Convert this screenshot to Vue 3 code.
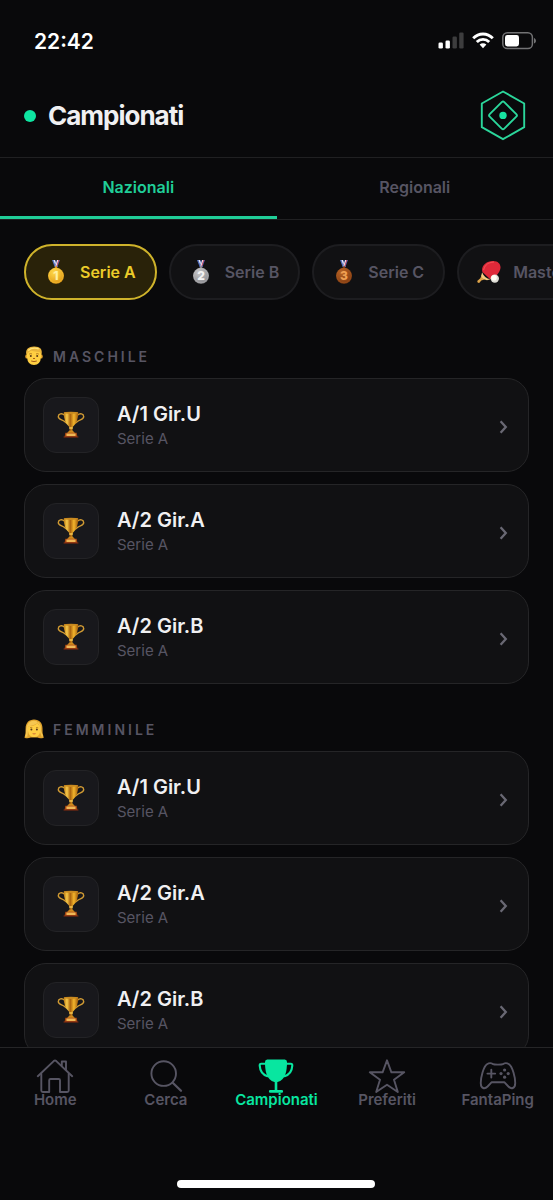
<script setup>
import { ref } from 'vue'

const tabs = ['Nazionali', 'Regionali']
const activeTab = ref('Nazionali')

const series = [
  { name: 'Serie A', icon: 'medal', rank: '1', light: '#ffd94a', dark: '#dc9210', digit: '#fff0a0' },
  { name: 'Serie B', icon: 'medal', rank: '2', light: '#c9c9cb', dark: '#858589', digit: '#f3f3f3' },
  { name: 'Serie C', icon: 'medal', rank: '3', light: '#b96425', dark: '#7b3810', digit: '#f0a052' },
  { name: 'Master', icon: 'paddle' },
]
const activeSeries = ref('Serie A')

const groups = [
  { name: 'Maschile', face: 'man', items: ['A/1 Gir.U', 'A/2 Gir.A', 'A/2 Gir.B'] },
  { name: 'Femminile', face: 'woman', items: ['A/1 Gir.U', 'A/2 Gir.A', 'A/2 Gir.B'] },
]

const nav = [
  { name: 'Home', icon: 'home' },
  { name: 'Cerca', icon: 'search' },
  { name: 'Campionati', icon: 'cup' },
  { name: 'Preferiti', icon: 'star' },
  { name: 'FantaPing', icon: 'pad' },
]
const activeNav = ref('Campionati')
</script>

<template>
  <div class="app">
    <div class="status">
      <time>22:42</time>
      <div class="status-icons">
        <svg width="26" height="18" viewBox="0 0 26 18" aria-hidden="true">
          <rect x="0.5" y="10.5" width="4.4" height="6" rx="1.3" fill="#fff" />
          <rect x="7.5" y="8.5" width="4.4" height="8" rx="1.3" fill="#fff" />
          <rect x="14.5" y="4.5" width="4.4" height="12" rx="1.3" fill="#3d3d3e" />
          <rect x="21.2" y="0.5" width="4.4" height="16" rx="1.3" fill="#3d3d3e" />
        </svg>
        <svg width="22" height="18" viewBox="0 0 22 18" aria-hidden="true">
          <g fill="none" stroke="#fff" stroke-width="2.9">
            <path d="M1.2 6.3C6.7 .6 15.3 .6 20.8 6.3" />
            <path d="M4.8 10.1C8.3 6.5 13.7 6.5 17.2 10.1" />
          </g>
          <path d="M7.6 12.6C9.6 10.8 12.4 10.8 14.4 12.6L11 16.2Z" fill="#fff" />
        </svg>
        <svg width="35" height="18" viewBox="0 0 35 18" aria-hidden="true">
          <rect x="0.8" y="0.8" width="29.6" height="15.8" rx="4.6" fill="none" stroke="#727274" stroke-width="1.5" />
          <rect x="3" y="3" width="14" height="11.4" rx="2.4" fill="#fff" />
          <path d="M32 6V11.6C34.6 10.6 34.6 7 32 6Z" fill="#727274" />
        </svg>
      </div>
    </div>

    <header class="header">
      <h1><span class="dot"></span>Campionati</h1>
      <button class="logo" aria-label="Menu">
        <svg width="48" height="52" viewBox="0 0 48 52" fill="none" stroke="#2bd69b" stroke-width="1.9" stroke-linejoin="round">
          <path d="M24 1.5L45.2 13.5V37.2L24 49.2L2.8 37.2V13.5Z" />
          <rect x="13.7" y="15.1" width="20.6" height="20.6" rx="1.8" transform="rotate(45 24 25.4)" />
          <circle cx="24" cy="25.4" r="3.7" fill="#17e3a1" stroke="none" />
        </svg>
      </button>
    </header>

    <div class="tabs" role="tablist">
      <button
        v-for="tab in tabs"
        :key="tab"
        role="tab"
        :aria-selected="activeTab === tab"
        :class="['tab', { active: activeTab === tab }]"
        @click="activeTab = tab"
      >{{ tab }}</button>
    </div>

    <main class="content">
      <div class="chips">
        <button
          v-for="s in series"
          :key="s.name"
          :class="['chip', { active: activeSeries === s.name }]"
          @click="activeSeries = s.name"
        >
          <svg v-if="s.icon === 'medal'" class="chip-icon" viewBox="0 0 24 24" aria-hidden="true">
            <defs>
              <radialGradient :id="'medal' + s.rank" cx=".38" cy=".3" r=".8">
                <stop offset="0" :stop-color="s.light" />
                <stop offset="1" :stop-color="s.dark" />
              </radialGradient>
            </defs>
            <path d="M8 0H11.3L14 7H10.7Z" fill="#5471c0" />
            <path d="M9.5 0H10.8L13.2 6.5H12Z" fill="#f3eef3" />
            <path d="M12.7 0H16L13.4 7H10.6Z" fill="#485cae" />
            <path d="M13.2 0H14.6L12.5 6.8H11.2Z" fill="#f4e9ed" />
            <path d="M14.3 0H15.2L13 6.6H12.2Z" fill="#d64858" />
            <circle cx="12" cy="7.5" r="1.3" :fill="s.dark" />
            <circle cx="12" cy="15.8" r="8" :fill="`url(#medal${s.rank})`" />
            <circle cx="12" cy="15.8" r="7" fill="none" :stroke="s.light" stroke-opacity=".4" stroke-width=".7" />
            <text x="12" y="20" text-anchor="middle" font-size="12" font-weight="800" :fill="s.digit">{{ s.rank }}</text>
          </svg>
          <svg v-else class="chip-icon" viewBox="0 0 24 24" aria-hidden="true">
            <path d="M5.2 14L9 19L4.3 20.5L2.2 23Q.3 23.2 .2 21.1L3.3 18.2Z" fill="#dda34a" />
            <path d="M5.1 12.2Q7.3 18.4 13.4 19.2L10 20.3Q5.2 18.9 4.2 16Z" fill="#f5ce83" />
            <path d="M5.4 12C3.7 6.4 8.8 1 16 .9C22.4 .8 25.2 6 22.6 11.1C20 16.2 16 19.2 12.9 19Z" fill="#df2939" />
            <path d="M6.5 10C8 4 13 2 17 2.2" fill="none" stroke="#f04b52" stroke-width="1.2" />
            <circle cx="17.8" cy="18.6" r="4.2" fill="#deddd5" />
            <circle cx="17" cy="17.7" r="2.8" fill="#fffdf3" />
          </svg>
          <span>{{ s.name }}</span>
        </button>
      </div>

      <section v-for="g in groups" :key="g.name" class="group">
        <h2>
          <svg v-if="g.face === 'man'" class="face" viewBox="0 0 20 20" aria-hidden="true">
            <ellipse cx="2.8" cy="10.4" rx="1.5" ry="2.2" fill="#e9a82e" />
            <ellipse cx="17.2" cy="10.4" rx="1.5" ry="2.2" fill="#e9a82e" />
            <path d="M3 5Q10 1 17 5V11Q16.4 19 10 19T3 11Z" fill="#ffcf42" />
            <path d="M2.4 8.8C1.1 3.2 4.7 .7 10 .6C16 .5 18.9 3.3 17.5 8.8L15.9 6.2Q10.5 5.7 7 4.8L4 7Z" fill="#e9b53c" />
            <path d="M4.2 4.4Q8 1 14.7 2.7" fill="none" stroke="#ffe37b" stroke-width="1.4" />
            <path d="M5.2 8.1Q6.7 7.2 8 8M12 8Q13.3 7.2 14.8 8.1" fill="none" stroke="#a66a17" stroke-width=".8" />
            <circle cx="6.8" cy="10" r="1" fill="#593817" />
            <circle cx="13.2" cy="10" r="1" fill="#593817" />
            <path d="M9 12.3Q10 13 11 12.3M7.2 15Q10 16.2 12.8 15" fill="none" stroke="#a25b1a" stroke-width="1" />
          </svg>
          <svg v-else class="face" viewBox="0 0 20 20" aria-hidden="true">
            <path d="M.5 18.7Q1.9 14 1.6 9.5C1.6 3.7 5 .6 10 .5C15.5 .5 18.5 4 18.5 9.3Q18 14 19.8 18.7Q16 20 13.5 18.5H6.7Q3.5 20 .5 18.7Z" fill="#dfa22c" />
            <path d="M4.2 7.3Q11 7.4 13.2 4L16.2 8V12Q15.5 18 10.2 18T4 12Z" fill="#ffce43" />
            <path d="M2.1 15C2 7 3.4 2.6 9 1.8Q13 1.2 14 3.5Q10.5 6.7 4.3 7.3L3.4 17.5Q1.8 18 1.2 17.6Z" fill="#f6c751" />
            <path d="M14 3.5Q17 6.3 16.3 12L18.4 17.5" fill="none" stroke="#f5c64e" stroke-width="1.4" />
            <circle cx="7.4" cy="10.4" r="1" fill="#593817" />
            <circle cx="12.9" cy="10.4" r="1" fill="#593817" />
            <path d="M6 8.8Q7.1 8 8.3 8.6M12 8.6Q13.1 8 14.3 8.8" fill="none" stroke="#a66a17" stroke-width=".7" />
            <path d="M8.2 14.4Q10.1 16.2 12.1 14.4Z" fill="#c04b31" />
          </svg>
          {{ g.name }}
        </h2>
        <ul>
          <li v-for="item in g.items" :key="item">
            <a class="card" href="#">
              <span class="badge">
                <svg width="28" height="28" viewBox="0 0 28 28" aria-hidden="true">
                  <defs>
                    <linearGradient id="gold" x1="0" x2="1" y1="0" y2="0">
                      <stop offset="0" stop-color="#bb7912" />
                      <stop offset=".22" stop-color="#f8cb4b" />
                      <stop offset=".45" stop-color="#a9620e" />
                      <stop offset=".7" stop-color="#f3b52c" />
                      <stop offset="1" stop-color="#9f590c" />
                    </linearGradient>
                  </defs>
                  <g fill="none" stroke="#d09a33" stroke-width="1.4" stroke-linecap="round">
                    <path d="M7.6 4.2C5 1.8 1.4 2.6 1.3 5.4C1.3 8.6 5.4 8.4 7.6 10.6C8.6 11.6 9.4 12.2 10.2 12" />
                    <path d="M20.4 4.2C23 1.8 26.6 2.6 26.7 5.4C26.7 8.6 22.6 8.4 20.4 10.6C19.4 11.6 18.6 12.2 17.8 12" />
                  </g>
                  <path d="M6.8 1.6H21.2Q21.3 11.6 15.9 15.8L15.3 18L16 21.4H12L12.7 18L12.1 15.8Q6.7 11.6 6.8 1.6Z" fill="url(#gold)" />
                  <ellipse cx="14" cy="1.8" rx="7.2" ry="1.1" fill="#c98a20" />
                  <rect x="12" y="16.3" width="4" height="1.4" rx=".7" fill="#f7ca51" />
                  <path d="M11.3 20.4Q14 19 16.7 20.4L18 22.2H10Z" fill="#d18a1e" />
                  <path d="M8.3 21.8H19.7L20.4 26H7.6Z" fill="#a94912" />
                  <rect x="9.4" y="22.4" width="9.2" height="2.5" rx=".4" fill="#efb857" />
                  <path d="M6.6 26H21.4" stroke="#842d12" stroke-width="1.1" />
                </svg>
              </span>
              <span class="text">
                <strong>{{ item }}</strong>
                <small>Serie A</small>
              </span>
              <svg class="chevron" width="12" height="20" viewBox="0 0 12 20" aria-hidden="true">
                <path d="M2.6 6.2L7.8 12L2.6 17.8" fill="none" stroke="currentColor" stroke-width="2.3" />
              </svg>
            </a>
          </li>
        </ul>
      </section>
    </main>

    <nav class="nav">
      <button
        v-for="n in nav"
        :key="n.name"
        :class="['nav-item', { active: activeNav === n.name }]"
        @click="activeNav = n.name"
      >
        <svg width="40" height="34" viewBox="0 0 40 34" fill="none" stroke="currentColor" stroke-width="1.9" stroke-linejoin="round" stroke-linecap="round" aria-hidden="true">
          <g v-if="n.icon === 'home'">
            <path d="M2.8 17.2L18.7 2.1Q20 1 21.3 2.1L37.2 17.2" />
            <path d="M6.3 14.8V31.5Q6.3 33 7.8 33H14.2V21.3Q14.2 20 15.5 20H23.7Q25 20 25 21.3V33H32.2Q33.7 33 33.7 31.5V14.8" />
            <path d="M26.8 6.2V2.5H31V10.8" />
          </g>
          <g v-else-if="n.icon === 'search'">
            <circle cx="17.7" cy="14.6" r="12.3" />
            <path d="M26.7 23.7L35 31.8" stroke-width="2.3" />
          </g>
          <g v-else-if="n.icon === 'cup'">
            <path d="M11.2 .5H28.8Q31 .5 31 3C31 12.6 29.4 20.8 21.6 23H18.4C10.6 20.8 9 12.6 9 3Q9 .5 11.2 .5Z" fill="currentColor" stroke="none" />
            <path d="M9.5 4.8H5.2Q3.6 4.8 3.7 6.6C4 11.4 6.6 15.6 11.4 17.2M30.5 4.8H34.8Q36.4 4.8 36.3 6.6C36 11.4 33.4 15.6 28.6 17.2" stroke-width="2.1" />
            <path d="M20 22V32.4M14.2 32.4H25.8" stroke-width="2.6" />
          </g>
          <path v-else-if="n.icon === 'star'" d="M20 1.3L24.4 13.3H37.2L27 20.8L30.8 33L20 25.7L9.2 33L13 20.8L2.8 13.3H15.6Z" />
          <g v-else>
            <path d="M9 5.2Q12 3.3 14.5 4.8Q16 5.6 20 5.6T25.5 4.8Q28 3.3 31 5.2C34.5 7.5 37.4 18.5 37.2 24.4C37.1 29.7 33.2 30.3 30.4 27.5L26.3 23.2H13.7L9.6 27.5C6.8 30.3 2.9 29.7 2.8 24.4C2.6 18.5 5.5 7.5 9 5.2Z" />
            <path d="M13.3 10.7V18.5M9.4 14.6H17.2" />
            <g fill="currentColor" stroke="none">
              <circle cx="26.6" cy="11" r="1.6" />
              <circle cx="26.6" cy="18.2" r="1.6" />
              <circle cx="23" cy="14.6" r="1.6" />
              <circle cx="30.2" cy="14.6" r="1.6" />
            </g>
          </g>
        </svg>
        <span>{{ n.name }}</span>
      </button>
      <div class="indicator"></div>
    </nav>
  </div>
</template>

<style>
body {
  margin: 0;
  background: #09090b;
}
</style>

<style scoped>
.app {
  display: flex;
  flex-direction: column;
  height: 100vh;
  overflow: hidden;
  background: #09090b;
  color: #f0f0f2;
  font-family: Inter, "Liberation Sans", sans-serif;
}
button {
  padding: 0;
  border: 0;
  background: none;
  color: inherit;
  font: inherit;
  cursor: pointer;
}
svg {
  display: block;
  flex: none;
}
.status {
  display: flex;
  flex: none;
  align-items: center;
  justify-content: space-between;
  height: 58px;
  padding: 24px 16px 0 34px;
  box-sizing: border-box;
  color: #fff;
  font-size: 21px;
  font-weight: 600;
}
.status-icons {
  display: flex;
  gap: 8px;
}
.header {
  display: flex;
  flex: none;
  align-items: center;
  justify-content: space-between;
  height: 100px;
  padding: 16px 26px 0 24px;
  border-bottom: 1px solid #202022;
  box-sizing: border-box;
}
h1 {
  display: flex;
  align-items: center;
  gap: 12px;
  margin: 0;
  font-size: 26px;
  font-weight: 700;
  letter-spacing: -1px;
}
.dot {
  width: 12px;
  height: 12px;
  border-radius: 50%;
  background: #0ee5a1;
}
.tabs {
  display: flex;
  flex: none;
  height: 62px;
  border-bottom: 1px solid #202022;
  box-sizing: border-box;
}
.tab {
  flex: 1;
  border-bottom: 3px solid transparent;
  color: #575563;
  font-size: 16px;
  font-weight: 600;
}
.tab.active {
  border-color: #20ce98;
  color: #20ce98;
}
.content {
  flex: 1;
  min-height: 0;
  padding: 24px 24px 0;
  overflow: hidden;
}
.chips {
  display: flex;
  gap: 12px;
  margin-right: -24px;
  overflow: hidden;
}
.chip {
  display: flex;
  flex: none;
  align-items: center;
  gap: 12px;
  height: 56px;
  padding: 0 19px 0 18px;
  border: 2px solid #1d1d20;
  border-radius: 28px;
  background: #111113;
  color: #575563;
  font-size: 16px;
  font-weight: 600;
}
.chip.active {
  border-color: #cfb32b;
  background: #292209;
  color: #eccc29;
}
.chip-icon {
  width: 24px;
  height: 24px;
}
.group h2 {
  display: flex;
  align-items: center;
  gap: 9px;
  height: 20px;
  margin: 46px 0 12px;
  color: #575563;
  font-size: 14px;
  font-weight: 600;
  letter-spacing: 3px;
  text-transform: uppercase;
}
.group + .group h2 {
  margin-top: 35px;
}
.face {
  width: 20px;
  height: 20px;
}
ul {
  display: flex;
  flex-direction: column;
  gap: 12px;
  margin: 0;
  padding: 0;
  list-style: none;
}
.card {
  display: flex;
  align-items: center;
  gap: 18px;
  height: 94px;
  padding: 0 18px;
  border: 1px solid #252527;
  border-radius: 22px;
  box-sizing: border-box;
  background: #111113;
  color: inherit;
  text-decoration: none;
}
.badge {
  display: grid;
  place-items: center;
  width: 56px;
  height: 56px;
  border: 1px solid #232326;
  border-radius: 13px;
  box-sizing: border-box;
  background: #18181c;
}
.text {
  display: flex;
  flex: 1;
  flex-direction: column;
}
strong {
  font-size: 20px;
  font-weight: 600;
  line-height: 28px;
}
small {
  color: #575563;
  font-size: 15px;
  line-height: 22px;
}
.chevron {
  color: #696873;
}
.nav {
  display: grid;
  flex: none;
  grid-template-columns: repeat(5, 1fr);
  grid-template-rows: 1fr auto;
  height: 153px;
  padding: 11px 0 12px;
  border-top: 1px solid #252527;
  box-sizing: border-box;
  background: #09090b;
}
.nav-item {
  display: flex;
  flex-direction: column;
  align-items: center;
  color: #575563;
  font-size: 15px;
  font-weight: 600;
  line-height: 14px;
}
.nav-item.active {
  color: #08e6a0;
}
.indicator {
  grid-column: 1 / -1;
  justify-self: center;
  width: 198px;
  height: 8px;
  border-radius: 4px;
  background: #fff;
}
</style>
